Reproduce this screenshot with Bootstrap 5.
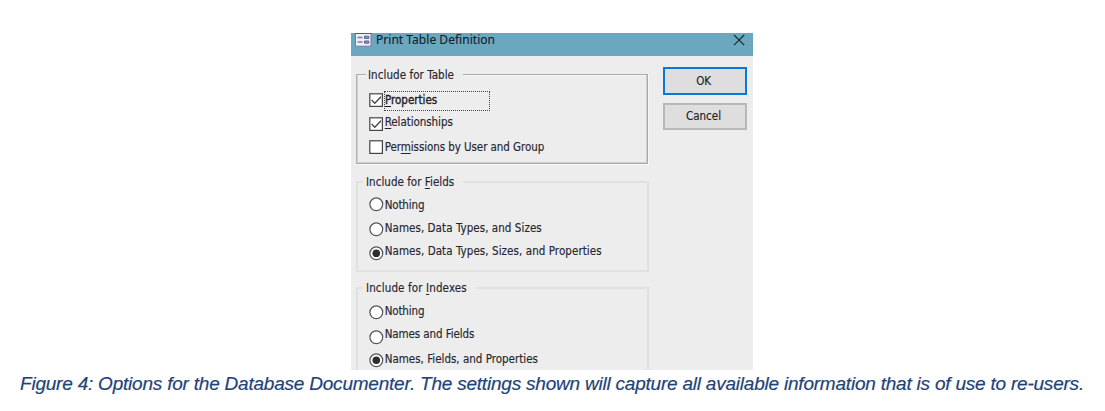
<!DOCTYPE html>
<html lang="en">
<head>
<meta charset="utf-8">
<meta name="viewport" content="width=device-width, initial-scale=1">
<title>Print Table Definition</title>
<link href="https://cdn.jsdelivr.net/npm/bootstrap@5.3.0/dist/css/bootstrap.min.css" rel="stylesheet">
<style>
body{background:#fff;overflow:hidden}
figure.fig{padding-top:33px}
.dialog{width:402px;height:337px;margin-left:351px;background:#ededed;color:#262630;font:11.5px/14px "DejaVu Sans Condensed","DejaVu Sans",sans-serif;-webkit-text-stroke:.15px #262630}
.titlebar{height:23px;background:#6ba7bf;color:#14212a;font:12px/14px "Noto Sans",sans-serif;letter-spacing:.03px;padding:0 7px 0 4px;-webkit-text-stroke:.1px #14212a}
.dlg-body{height:314px;padding:11px 6px 0 5px}
.group{width:293px;height:91px;border:2px solid #e1e1e1;padding-left:11px}
.group.first{width:292px;height:90px;border:1px solid #ababab;border-left-color:#b4b4b4;padding-left:12px;margin-top:7px;margin-bottom:17px;box-shadow:inset 1px 0 #cfcfcf,inset -1px 0 #cccccc,inset 0 -1px #d0d0d0,inset 0 1px #f8f8f8,1px 1px #f7f7f7}
.group.fields{margin-bottom:15px}
.legend-line{margin:-8px 0 0 -6px;height:14px;width:max-content;padding:0 9px 0 3px;line-height:14px;background:#ededed;white-space:nowrap}
.group.first .legend-line{margin:-8px 0 0 -3px;padding-left:2px;padding-top:1px}
.opts{padding-top:7px}
.first .opts{padding-top:10px}
.opt{height:24px;white-space:nowrap}
.first .opt{height:23.5px}
.opt svg{flex:none;width:15px;height:15px;margin-top:var(--m,2px)}
.opt span{margin-top:var(--t,0px);padding-left:.7px}
.opt .focus-box{width:106px;height:20px;border:1px dotted #444;margin-top:0;padding-left:0;line-height:17px;-webkit-text-stroke:.35px #1c1c24}
u{text-underline-offset:1.5px;text-decoration-thickness:1px}
.dlg-btn{width:84px;height:27px;border:2px solid #b8b8b8;border-radius:0;background:#dedede;color:#20202a;font:inherit;padding:0 3px 1px 0}
.dlg-btn.default{height:28px;border:2px solid #0b78d8;letter-spacing:-.2px}
.dlg-btns{gap:8px}
.cap{color:#1f4379;font:italic 19px/22px "Liberation Sans",Arial,sans-serif;letter-spacing:-.215px;white-space:nowrap;margin:3px 0 0 20px;-webkit-text-stroke:.2px #1f4379}
</style>
</head>
<body>
<svg class="d-none">
  <symbol id="check" viewBox="0 0 15 15"><rect x=".8" y=".8" width="12.6" height="12.6" fill="#fff" stroke="#444" stroke-width="1.2"/><path d="M2.6 7 5.8 10.2 12 3.8" fill="none" stroke="#444" stroke-width="1.3"/></symbol>
  <symbol id="empty" viewBox="0 0 15 15"><rect x=".8" y=".8" width="12.6" height="12.6" fill="#fff" stroke="#444" stroke-width="1.2"/></symbol>
  <symbol id="radio" viewBox="0 0 15 15"><circle cx="7.3" cy="7.3" r="6.4" fill="#fff" stroke="#555" stroke-width="1.2"/></symbol>
  <symbol id="radio-on" viewBox="0 0 15 15"><circle cx="7.3" cy="7.3" r="6.4" fill="#fff" stroke="#555" stroke-width="1.2"/><circle cx="7.3" cy="7.3" r="3.8" fill="#2d2d2d"/></symbol>
</svg>
<figure class="fig m-0">
  <div class="dialog">
    <div class="titlebar d-flex align-items-start">
      <svg width="17" height="14" viewBox="0 0 17 14"><path d="M.5 0v13.2h15.5V0z" fill="#eef0f8" stroke="#7a7aa6"/><path d="M0 0h16.5v1H0z" fill="#a03a58"/><path d="M2.5 4.5h5M2.5 9h5" stroke="#77789c" stroke-width="1.3"/><path d="M9.5 3.2h4.3v2.2H9.5zM9.5 8h4.3v2.2H9.5z" fill="#9299c4" stroke="#5a6092"/></svg>
      <span class="ms-1">Print Table Definition</span>
      <svg class="ms-auto" width="13" height="14" viewBox="0 0 13 14"><path d="M1 2 11.2 12.2M11.2 2 1 12.2" stroke="#1c2930" stroke-width="1.15"/></svg>
    </div>
    <div class="dlg-body d-flex justify-content-between overflow-hidden">
      <div>
        <div class="group first">
          <div class="legend-line" style="letter-spacing:.06px">Include for Table</div>
          <div class="opts">
            <div class="opt d-flex" style="--m:1.5px"><svg><use href="#check"/></svg><span class="focus-box"><u>P</u>roperties</span></div>
            <div class="opt d-flex" style="--m:2.5px;--t:.5px"><svg><use href="#check"/></svg><span style="letter-spacing:-.06px"><u>R</u>elationships</span></div>
            <div class="opt d-flex" style="--m:2px;--t:1.5px"><svg><use href="#empty"/></svg><span style="letter-spacing:-.07px">Per<u>m</u>issions by User and Group</span></div>
          </div>
        </div>
        <div class="group fields">
          <div class="legend-line" style="letter-spacing:.03px">Include for <u>F</u>ields</div>
          <div class="opts">
            <div class="opt d-flex" style="--m:1px;--t:1.5px"><svg><use href="#radio"/></svg><span style="letter-spacing:-.15px">Nothing</span></div>
            <div class="opt d-flex" style="--m:1.5px;--t:.5px"><svg><use href="#radio"/></svg><span style="letter-spacing:.06px">Names, Data Types, and Sizes</span></div>
            <div class="opt d-flex" style="--m:2px;--t:-.5px"><svg><use href="#radio-on"/></svg><span style="letter-spacing:.07px">Names, Data Types, Sizes, and Properties</span></div>
          </div>
        </div>
        <div class="group">
          <div class="legend-line" style="letter-spacing:.13px">Include for <u>I</u>ndexes</div>
          <div class="opts">
            <div class="opt d-flex" style="--m:3px;--t:1.5px"><svg><use href="#radio"/></svg><span style="letter-spacing:-.15px">Nothing</span></div>
            <div class="opt d-flex" style="--m:3.5px;--t:.5px"><svg><use href="#radio"/></svg><span style="letter-spacing:-.1px">Names and Fields</span></div>
            <div class="opt d-flex" style="--m:2.5px;--t:1.5px"><svg><use href="#radio-on"/></svg><span>Names, Fields, and Properties</span></div>
          </div>
        </div>
      </div>
      <div class="dlg-btns d-flex flex-column">
        <button class="btn dlg-btn default">OK</button>
        <button class="btn dlg-btn">Cancel</button>
      </div>
    </div>
  </div>
  <figcaption class="cap">Figure 4: Options for the Database Documenter. The settings shown will capture all available information that is of use to re-users.</figcaption>
</figure>
<script src="https://cdn.jsdelivr.net/npm/bootstrap@5.3.0/dist/js/bootstrap.bundle.min.js"></script>
</body>
</html>
